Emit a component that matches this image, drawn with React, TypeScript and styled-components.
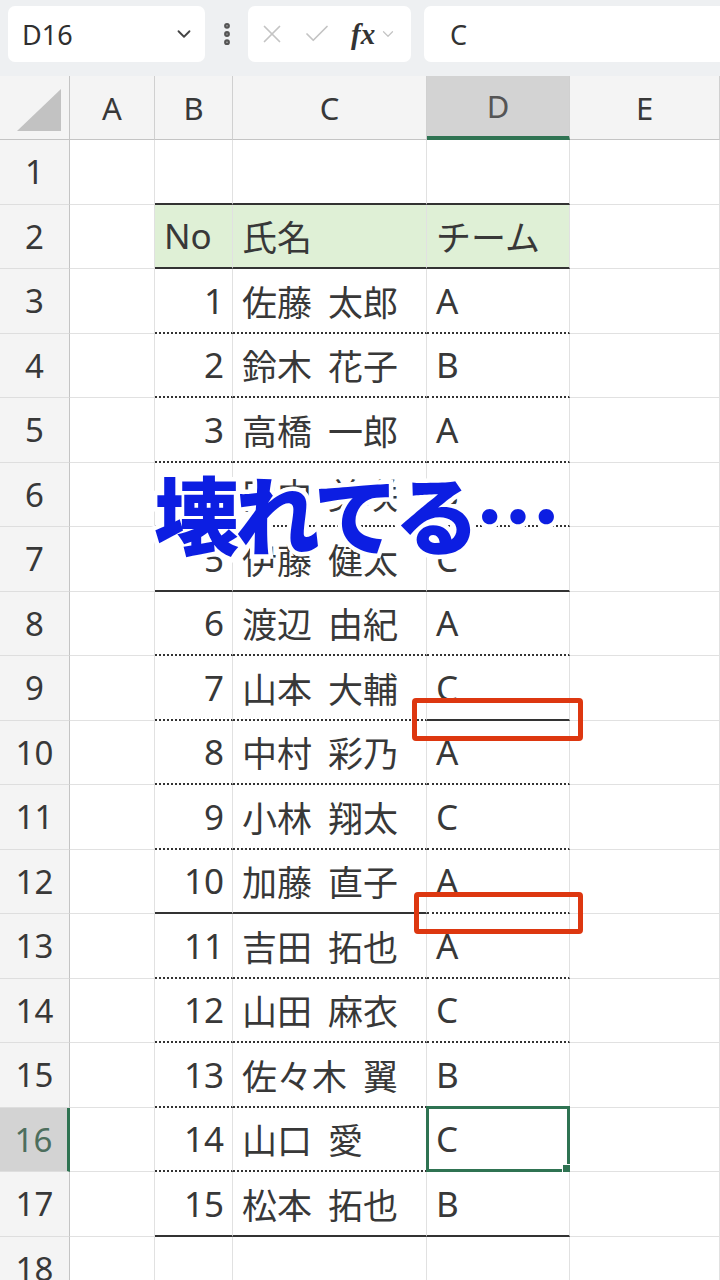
import * as React from 'react';
import styled, { createGlobalStyle } from 'styled-components';
import { Check, ChevronDown, EllipsisVertical, X } from 'lucide-react';

type Line = 'solid' | 'dotted';

interface Member {
  no: number;
  name: string;
  team: string;
  line: Line;
  teamLine?: Line;
}

const members: Member[] = [
  { no: 1, name: '佐藤 太郎', team: 'A', line: 'dotted' },
  { no: 2, name: '鈴木 花子', team: 'B', line: 'dotted' },
  { no: 3, name: '高橋 一郎', team: 'A', line: 'dotted' },
  { no: 4, name: '田中 美咲', team: 'B', line: 'dotted' },
  { no: 5, name: '伊藤 健太', team: 'C', line: 'solid' },
  { no: 6, name: '渡辺 由紀', team: 'A', line: 'dotted' },
  { no: 7, name: '山本 大輔', team: 'C', line: 'dotted', teamLine: 'solid' },
  { no: 8, name: '中村 彩乃', team: 'A', line: 'dotted' },
  { no: 9, name: '小林 翔太', team: 'C', line: 'dotted' },
  { no: 10, name: '加藤 直子', team: 'A', line: 'solid', teamLine: 'dotted' },
  { no: 11, name: '吉田 拓也', team: 'A', line: 'dotted' },
  { no: 12, name: '山田 麻衣', team: 'C', line: 'dotted' },
  { no: 13, name: '佐々木 翼', team: 'B', line: 'dotted' },
  { no: 14, name: '山口 愛', team: 'C', line: 'dotted' },
  { no: 15, name: '松本 拓也', team: 'B', line: 'solid' },
];

const GRID = '#e1e1e1';
const INK = '#383838';
const EXCEL_GREEN = '#2f7352';

const GlobalStyle = createGlobalStyle`
  html, body {
    margin: 0;
    padding: 0;
    background: #ffffff;
    overflow: hidden;
  }
  body {
    font-family: "Noto Sans", "Noto Sans CJK JP", sans-serif;
    color: ${INK};
  }
`;

const Page = styled.div`
  width: 720px;
  height: 1280px;
  overflow: hidden;
  background: #fff;
`;

/* formula bar */

const FormulaBar = styled.div`
  display: flex;
  align-items: flex-start;
  gap: 13px;
  height: 76px;
  padding: 6px 0 0 8px;
  box-sizing: border-box;
  background: #eef0f2;
`;

const Field = styled.div<{ $w?: number }>`
  display: flex;
  align-items: center;
  height: 56px;
  box-sizing: border-box;
  background: #fff;
  border-radius: 7px;
  ${(p) => (p.$w ? `width: ${p.$w}px;` : 'flex: 1;')}
`;

const NameBox = styled(Field)`
  justify-content: space-between;
  padding: 0 10px 0 14px;
  font-size: 27px;
  color: #2f2f2f;
`;

const MoreSlot = styled.div`
  display: flex;
  align-items: center;
  justify-content: center;
  width: 17px;
  height: 56px;
  color: #555;

  svg {
    flex-shrink: 0;
  }
`;

const FxBox = styled(Field)`
  padding: 0 8px 0 9px;
  gap: 15px;
  color: #c4c4c4;
`;

const Fx = styled.span`
  font-family: "Liberation Serif", serif;
  font-style: italic;
  font-weight: 700;
  font-size: 29px;
  color: #333;
  margin-left: 4px;
  margin-right: -11px;
`;

const Formula = styled(Field)`
  padding-left: 26px;
  border-radius: 7px 0 0 7px;
  font-size: 27px;
  color: #333;
`;

/* sheet */

const Sheet = styled.div`
  position: relative;
`;

const Row = styled.div<{ $h: number }>`
  display: grid;
  grid-template-columns: 70px 85px 78px 194px 143px 1fr;
  height: ${(p) => p.$h}px;
`;

const ColHead = styled.div<{ $active?: boolean }>`
  display: flex;
  align-items: center;
  justify-content: center;
  box-sizing: border-box;
  font-size: 31px;
  background: ${(p) => (p.$active ? '#d3d3d3' : '#f4f4f4')};
  color: ${(p) => (p.$active ? '#555' : INK)};
  border-right: 1px solid #d0d0d0;
  border-bottom: ${(p) => (p.$active ? `4px solid ${EXCEL_GREEN}` : '1px solid #c4c4c4')};
`;

const Corner = styled.div`
  display: flex;
  align-items: flex-end;
  justify-content: flex-end;
  padding: 0 8px 8px 0;
  box-sizing: border-box;
  background: #f4f4f4;
  border-right: 1px solid #c4c4c4;
  border-bottom: 1px solid #c4c4c4;
`;

const RowHead = styled.div<{ $active?: boolean }>`
  display: flex;
  align-items: center;
  justify-content: center;
  box-sizing: border-box;
  font-size: 33px;
  background: ${(p) => (p.$active ? '#d3d3d3' : '#f4f4f4')};
  color: ${(p) => (p.$active ? '#4d6e5d' : INK)};
  border-bottom: 1px solid #dedede;
  border-right: ${(p) => (p.$active ? `3px solid ${EXCEL_GREEN}` : '1px solid #c4c4c4')};
`;

const Cell = styled.div<{ $line?: Line; $right?: boolean; $fill?: boolean }>`
  position: relative;
  display: flex;
  align-items: center;
  justify-content: ${(p) => (p.$right ? 'flex-end' : 'flex-start')};
  padding: 0 8px 0 9px;
  box-sizing: border-box;
  font-size: 35px;
  white-space: nowrap;
  word-spacing: 0.2em;
  background: ${(p) => (p.$fill ? '#dff0d6' : '#fff')};
  border-right: 1px solid ${GRID};
  border-bottom: ${(p) => (p.$line ? `2px ${p.$line} #333` : `1px solid ${GRID}`)};
`;

const Selection = styled.div`
  position: absolute;
  left: -1px;
  top: -2px;
  right: -1px;
  bottom: -2px;
  border: 3px solid ${EXCEL_GREEN};
  pointer-events: none;

  &::after {
    content: '';
    position: absolute;
    right: -6px;
    bottom: -6px;
    width: 9px;
    height: 9px;
    background: ${EXCEL_GREEN};
    border: 1px solid #fff;
  }
`;

const Caption = styled.div`
  position: absolute;
  left: 154px;
  top: 393px;
  font-family: "Noto Sans CJK JP", sans-serif;
  font-weight: 900;
  font-size: 85px;
  line-height: 1;
  letter-spacing: -4px;
  color: #0c1ee2;
  -webkit-text-stroke: 9px #fff;
  paint-order: stroke fill;
  white-space: nowrap;
`;

const Marker = styled.div<{ $x: number; $y: number; $w: number; $h: number }>`
  position: absolute;
  left: ${(p) => p.$x}px;
  top: ${(p) => p.$y}px;
  width: ${(p) => p.$w}px;
  height: ${(p) => p.$h}px;
  box-sizing: border-box;
  border: 5px solid #dd3710;
  border-radius: 4px;
`;

const ROW_H = 64.5;
const columns = ['A', 'B', 'C', 'D', 'E'];

function CornerMark() {
  return (
    <svg width="44" height="42" viewBox="0 0 44 42">
      <polygon points="0,42 44,0 44,42" fill="#c2c2c2" />
    </svg>
  );
}

function EmptyRow({ n }: { n: number }) {
  return (
    <Row $h={ROW_H}>
      <RowHead>{n}</RowHead>
      <Cell />
      <Cell $line={n === 1 ? 'solid' : undefined} />
      <Cell $line={n === 1 ? 'solid' : undefined} />
      <Cell $line={n === 1 ? 'solid' : undefined} />
      <Cell />
    </Row>
  );
}

export default function App() {
  return (
    <Page>
      <GlobalStyle />
      <FormulaBar>
        <NameBox $w={197}>
          D16
          <ChevronDown size={22} color="#444" strokeWidth={2} />
        </NameBox>
        <MoreSlot>
          <EllipsisVertical size={28} strokeWidth={3} />
        </MoreSlot>
        <FxBox $w={163}>
          <X size={30} strokeWidth={1.4} />
          <Check size={30} strokeWidth={1.4} />
          <Fx>fx</Fx>
          <ChevronDown size={18} strokeWidth={1.6} />
        </FxBox>
        <Formula>C</Formula>
      </FormulaBar>

      <Sheet>
        <Row $h={64}>
          <Corner>
            <CornerMark />
          </Corner>
          {columns.map((c) => (
            <ColHead key={c} $active={c === 'D'}>
              {c}
            </ColHead>
          ))}
        </Row>

        <EmptyRow n={1} />

        <Row $h={ROW_H}>
          <RowHead>2</RowHead>
          <Cell />
          <Cell $fill $line="solid">No</Cell>
          <Cell $fill $line="solid">氏名</Cell>
          <Cell $fill $line="solid">チーム</Cell>
          <Cell />
        </Row>

        {members.map((m, i) => {
          const n = i + 3;
          return (
            <Row key={m.no} $h={ROW_H}>
              <RowHead $active={n === 16}>{n}</RowHead>
              <Cell />
              <Cell $right $line={m.line}>{m.no}</Cell>
              <Cell $line={m.line}>{m.name}</Cell>
              <Cell $line={m.teamLine ?? m.line}>
                {m.team}
                {n === 16 && <Selection />}
              </Cell>
              <Cell />
            </Row>
          );
        })}

        <EmptyRow n={18} />

        <Caption>壊れてる…</Caption>
        <Marker $x={412} $y={622} $w={171} $h={43} />
        <Marker $x={414} $y={816} $w={169} $h={42} />
      </Sheet>
    </Page>
  );
}
